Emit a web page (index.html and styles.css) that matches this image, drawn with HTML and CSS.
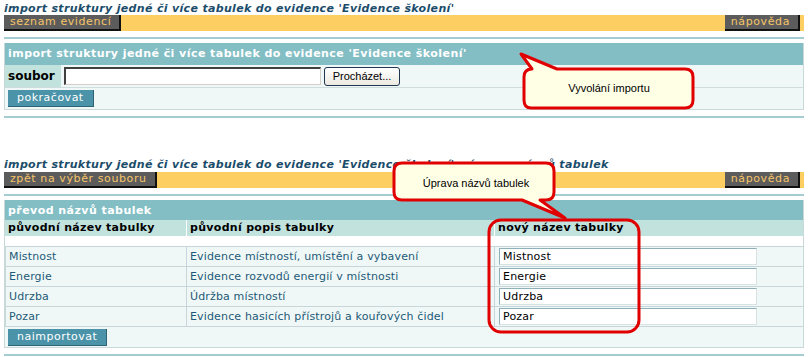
FILE: index.html
```html
<!DOCTYPE html>
<html lang="cs">
<head>
<meta charset="utf-8">
<title>Import struktury</title>
<link rel="stylesheet" href="styles.css">
</head>
<body>
<div class="page">
  <div class="title">import struktury jedné či více tabulek do evidence 'Evidence školení'</div>
  <div class="toolbar">
    <span class="tbtn">seznam evidencí</span>
    <span class="tbtn">nápověda</span>
  </div>
  <div class="rule"></div>
  <div class="panel">
    <div class="phead">import struktury jedné či více tabulek do evidence 'Evidence školení'</div>
    <div class="frow">
      <div class="flabel">soubor</div>
      <input class="ftext" type="text" value="">
      <button class="browse" type="button">Procházet...</button>
    </div>
    <div class="brow"><span class="actbtn">pokračovat</span></div>
  </div>
  <div class="rule"></div>

  <div class="title title2">import struktury jedné či více tabulek do evidence 'Evidence školení' - úprava názvů tabulek</div>
  <div class="toolbar">
    <span class="tbtn">zpět na výběr souboru</span>
    <span class="tbtn">nápověda</span>
  </div>
  <div class="rule"></div>
  <div class="panel panel2">
    <div class="phead ph2">převod názvů tabulek</div>
    <div class="grid">
      <div class="ch">původní název tabulky</div>
      <div class="ch">původní popis tabulky</div>
      <div class="ch">nový název tabulky</div>
      <div class="gap"></div>
      <div class="td">Mistnost</div><div class="td">Evidence místností, umístění a vybavení</div><div class="td tdin"><input class="nin" type="text" value="Mistnost"></div>
      <div class="td">Energie</div><div class="td">Evidence rozvodů energií v místnosti</div><div class="td tdin"><input class="nin" type="text" value="Energie"></div>
      <div class="td">Udrzba</div><div class="td">Údržba místností</div><div class="td tdin"><input class="nin" type="text" value="Udrzba"></div>
      <div class="td">Pozar</div><div class="td">Evidence hasicích přístrojů a kouřových čidel</div><div class="td tdin"><input class="nin" type="text" value="Pozar"></div>
    </div>
    <div class="brow"><span class="actbtn">naimportovat</span></div>
  </div>
  <div class="rule"></div>
</div>

<svg class="callouts" width="808" height="357" viewBox="0 0 808 357" xmlns="http://www.w3.org/2000/svg">
  <path d="M532,69 L521,54 L557,69 H685 Q693,69 693,77 V100 Q693,108 685,108 H531 Q524,108 524,100 V77 Q524,69 532,69 Z" fill="#ffffe6" stroke="#e00000" stroke-width="3" stroke-linejoin="round"/>
  <text x="609" y="92" text-anchor="middle" class="ctext">Vyvolání importu</text>
  <path d="M402,163 H546 Q554,163 554,171 V192 Q554,200 546,200 H540 L565,218 L522,200 H402 Q394,200 394,192 V171 Q394,163 402,163 Z" fill="#ffffe6" stroke="#e00000" stroke-width="3" stroke-linejoin="round"/>
  <text x="476" y="187" text-anchor="middle" class="ctext">Úprava názvů tabulek</text>
  <rect x="489" y="220" width="150" height="112" rx="12" ry="12" fill="none" stroke="#e00000" stroke-width="3"/>
</svg>
</body>
</html>
```

FILE: styles.css
```css
html, body {
  margin: 0;
  padding: 0;
  background: #ffffff;
}
body {
  font-family: "DejaVu Sans", Verdana, sans-serif;
  font-size: 11px;
  position: relative;
  width: 808px;
  height: 357px;
  overflow: hidden;
}
.page {
  padding: 2px 4px 0 4px;
}
.title {
  height: 13px;
  line-height: 13px;
  font-weight: bold;
  font-style: italic;
  color: #1b4d6b;
  white-space: nowrap;
  letter-spacing: 0.33px;
}
.title2 {
  margin-top: 40px;
  height: 14px;
}
.toolbar {
  height: 16px;
  background: #fdcf63;
  display: flex;
  justify-content: space-between;
  align-items: stretch;
}
.tbtn {
  background: #5c5c5c;
  color: #f6c468;
  border-right: 2px solid #111;
  border-bottom: 2px solid #111;
  padding: 0 8px 0 6px;
  line-height: 14px;
  letter-spacing: 0.6px;
}
.tbtn:last-child {
  margin-right: 4px;
}
.rule {
  margin-top: 6px;
  height: 2px;
  background: #a3cdd1;
}
.panel {
  margin-top: 4px;
  border: 1px solid #c9d9d9;
  border-top: none;
  background: #eff8f6;
}
.phead {
  height: 22px;
  line-height: 22px;
  background: #82bec4;
  color: #ffffff;
  font-weight: bold;
  padding-left: 3px;
  white-space: nowrap;
  letter-spacing: 0.45px;
}
.frow {
  display: flex;
  align-items: center;
  height: 22px;
  border-bottom: 1px solid #cfdedd;
}
.flabel {
  width: 53px;
  height: 22px;
  line-height: 22px;
  background: #c2e2de;
  font-weight: bold;
  font-size: 12px;
  color: #000;
  padding-left: 3px;
}
.ftext {
  margin: 0 0 0 3px;
  width: 254px;
  height: 15px;
  padding: 0;
  border-top: 2px solid #404040;
  border-left: 2px solid #404040;
  border-right: 1px solid #d4d0c8;
  border-bottom: 1px solid #d4d0c8;
  background: #ffffff;
}
.browse {
  margin: 0 0 0 3px;
  width: 76px;
  height: 19px;
  padding: 0;
  border: 1px solid #1f3550;
  border-radius: 3px;
  background: linear-gradient(#ffffff, #ece9e0);
  font-family: "Liberation Sans", Arial, sans-serif;
  font-size: 11px;
  color: #000;
}
.brow {
  height: 21px;
  display: flex;
  align-items: center;
  padding-left: 3px;
}
.actbtn {
  background: #4b93a8;
  color: #ffffff;
  height: 16px;
  line-height: 16px;
  padding: 0 9px;
  border-right: 1px solid #2e6374;
  border-bottom: 1px solid #2e6374;
  letter-spacing: 0.5px;
}
.ph2 {
  height: 20px;
  line-height: 21px;
}
.grid {
  display: grid;
  grid-template-columns: 181px 308px 1fr;
  background: #ffffff;
}
.ch {
  height: 16px;
  line-height: 15px;
  background: #c2e2de;
  font-weight: bold;
  color: #000;
  padding-left: 3px;
  border-left: 1px solid #ffffff;
  letter-spacing: 0.3px;
  white-space: nowrap;
}
.ch:first-child {
  border-left: none;
}
.gap {
  grid-column: 1 / 4;
  height: 10px;
  background: #ffffff;
}
.td {
  height: 19px;
  line-height: 19px;
  background: #eff8f6;
  border-top: 1px solid #c8d6da;
  border-left: 1px solid #c8d6da;
  color: #1e5a78;
  padding-left: 3px;
  white-space: nowrap;
  letter-spacing: 0.15px;
}
.tdin {
  display: flex;
  align-items: center;
}
.nin {
  margin: 0 0 0 1px;
  width: 253px;
  height: 15px;
  padding: 0 0 0 3px;
  border-top: 1px solid #8fb0b8;
  border-left: 1px solid #8fb0b8;
  border-right: 1px solid #d6e2e4;
  border-bottom: 1px solid #d6e2e4;
  background: #ffffff;
  font-family: "DejaVu Sans", Verdana, sans-serif;
  font-size: 11px;
  color: #000;
  letter-spacing: 0.2px;
}
.panel2 .brow {
  border-top: 1px solid #c8d6da;
  height: 20px;
}
.callouts {
  position: absolute;
  left: 0;
  top: 0;
  pointer-events: none;
}
.ctext {
  font-family: "Liberation Sans", Arial, sans-serif;
  font-size: 11px;
  fill: #000;
}
```
